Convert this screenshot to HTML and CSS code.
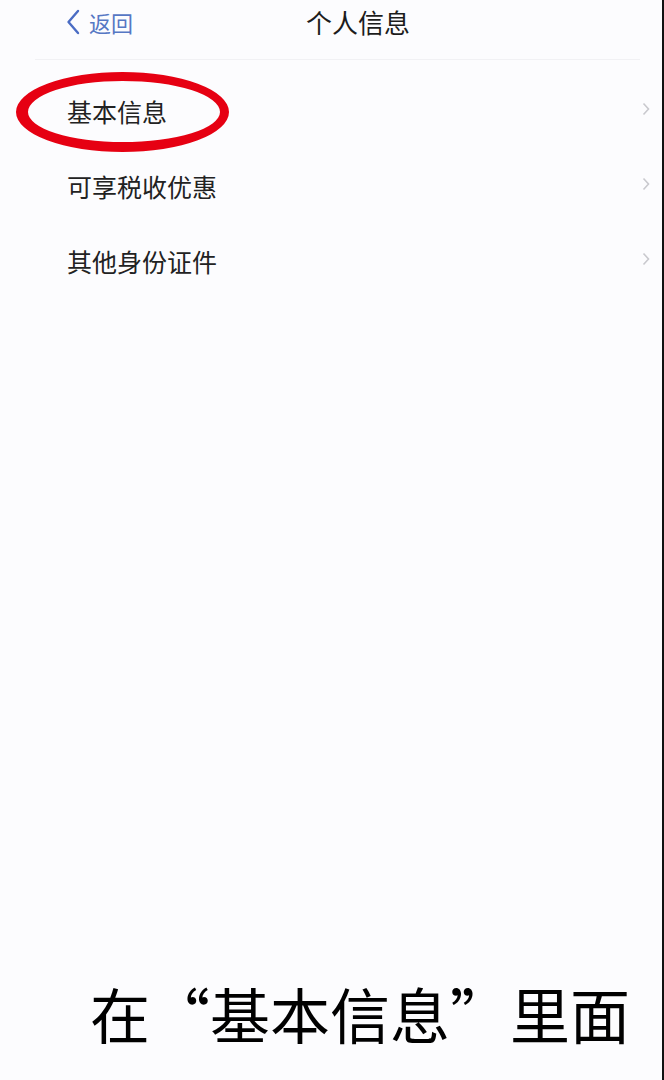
FILE: index.html
```
<!DOCTYPE html>
<html lang="zh-CN">

<head>
    <meta charset="UTF-8">
    <meta name="viewport" content="width=device-width, initial-scale=1.0">
    <title>个人信息</title>

    <link rel="stylesheet" href="styles.css">
</head>

<body>
    <div class="page">
        <!-- 顶部导航 -->
        <div class="navBar">
            <div class="backBtn">
                <svg class="backIcon" width="14" height="26" viewBox="0 0 14 26">
                    <path d="M12 2 L2.5 13 L12 24" fill="none" stroke="#4a6cc4" stroke-width="2.4" stroke-linecap="round" stroke-linejoin="round" />
                </svg>
                <span>返回</span>
            </div>
            <div class="navTitle">个人信息</div>
            <div></div>
        </div>

        <!-- 列表 -->
        <div class="menuList">
            <div class="menuItem">
                <span>基本信息</span>
                <svg class="arrow" width="8" height="14" viewBox="0 0 8 14">
                    <path d="M1.5 1.5 L6.5 7 L1.5 12.5" fill="none" stroke="#c9c9ce" stroke-width="1.6" />
                </svg>
                <div class="circleMark"></div>
            </div>
            <div class="menuItem">
                <span>可享税收优惠</span>
                <svg class="arrow" width="8" height="14" viewBox="0 0 8 14">
                    <path d="M1.5 1.5 L6.5 7 L1.5 12.5" fill="none" stroke="#c9c9ce" stroke-width="1.6" />
                </svg>
            </div>
            <div class="menuItem">
                <span>其他身份证件</span>
                <svg class="arrow" width="8" height="14" viewBox="0 0 8 14">
                    <path d="M1.5 1.5 L6.5 7 L1.5 12.5" fill="none" stroke="#c9c9ce" stroke-width="1.6" />
                </svg>
            </div>
        </div>

        <!-- 底部说明文字 -->
        <div class="caption">在“基本信息”里面</div>
    </div>
</body>

</html>
```

FILE: styles.css
```
* {
    box-sizing: border-box;
}

body {
    margin: 0;
    background-color: #fcfcfe;
    font-family: "Noto Sans CJK SC", "Noto Sans", sans-serif;
}

.page {
    width: 664px;
    height: 1080px;
    background-color: #fcfcfe;
    border-right: 2px solid #111;
    display: flex;
    flex-direction: column;
}

.navBar {
    height: 60px;
    padding-left: 54px;
    display: grid;
    grid-template-columns: 1fr auto 1fr;
    align-items: start;
    position: relative;
}

.navBar::after {
    content: "";
    position: absolute;
    left: 35px;
    right: 22px;
    bottom: 0;
    height: 1px;
    background-color: #f1f1f4;
}

.backBtn {
    margin-left: 12px;
    height: 44px;
    display: flex;
    align-items: center;
    color: #5677c4;
    font-size: 22px;
}

.backIcon {
    margin-right: 9px;
}

.navTitle {
    height: 44px;
    line-height: 44px;
    font-size: 26px;
    color: #1c1c1c;
}

.menuList {
    padding-top: 13px;
}

.menuItem {
    height: 75px;
    padding-left: 67px;
    padding-right: 12px;
    display: flex;
    align-items: center;
    justify-content: space-between;
    font-size: 25px;
    color: #222;
    position: relative;
}

.arrow {
    margin-top: -4px;
}

/* 红色圈注 */
.circleMark {
    position: absolute;
    left: 16px;
    top: -1px;
    width: 213px;
    height: 80px;
    border: 9px solid #e60012;
    border-left-width: 12px;
    border-bottom-width: 10px;
    border-radius: 50%;
}

.caption {
    margin-top: auto;
    padding-left: 90px;
    padding-bottom: 37px;
    font-size: 60px;
    line-height: 1;
    color: #000;
    white-space: nowrap;
}
```
